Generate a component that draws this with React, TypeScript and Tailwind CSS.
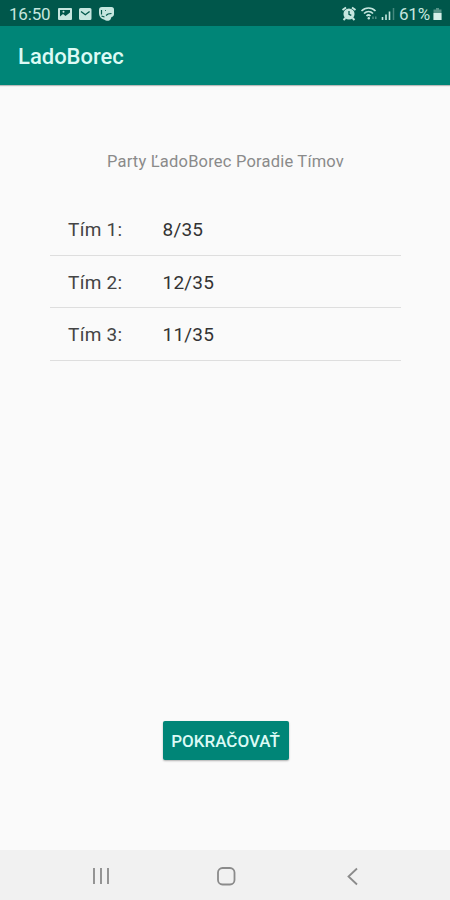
type TeamProps = {
  name: string
  score: string
}

const TEAMS: TeamProps[] = [
  { name: "Tím 1:", score: "8/35" },
  { name: "Tím 2:", score: "12/35" },
  { name: "Tím 3:", score: "11/35" },
]

const NotificationIcons = () => (
  <svg width="58" height="16" viewBox="0 0 58 16" className="ml-[7px]" fill="#c5e6df">
    {/* picture */}
    <path fillRule="evenodd" d="M2 2h12a1 1 0 0 1 1 1v10a1 1 0 0 1-1 1H2a1 1 0 0 1-1-1V3a1 1 0 0 1 1-1ZM3 4v6.500L6 8l2.500 2L13 6.500V4Z" />
    <circle cx="6.500" cy="5.700" r="1" />
    {/* mail */}
    <path d="M23.500 2h9.500a1.500 1.500 0 0 1 1.500 1.500v9A1.500 1.500 0 0 1 33 14h-9.500a1.500 1.500 0 0 1-1.500-1.500v-9A1.500 1.500 0 0 1 23.500 2Z" />
    <path d="m24 5.500 4.300 3.200 4.300-3.200" fill="none" stroke="#00574b" strokeWidth="1.400" />
    {/* chat */}
    <path d="M45 1h9.500A2.500 2.500 0 0 1 57 3.500V8c0 1.700-1 2.700-2.500 3l-1 2.500c-1.500 2-4.500 1.500-6.500 0-2.500-.5-5-3-5-6.500V4a3 3 0 0 1 3-3Z" />
    <path d="M44.500 4v4.500M44.500 10l3 1M49 9.500l2-1.500 3.500-.5M48 4.500h.8" fill="none" stroke="#00574b" strokeWidth="1.200" />
  </svg>
)

const SystemIcons = () => (
  <svg width="56" height="16" viewBox="0 0 56 16" fill="none" stroke="#c5e6df">
    {/* alarm */}
    <circle cx="8" cy="8" r="4.800" fill="#c5e6df" strokeWidth="1.500" />
    <path d="M1.500 4 5 1.500M11 1.500l3.500 2.500M2.500 14l2-2M13.500 14l-2-2" strokeWidth="2" />
    <path d="M8 5v3.300l2.300 1" stroke="#00574b" strokeWidth="1.300" />
    {/* wifi */}
    <path d="M20.500 5c4-4 10-4 14 0M23 7.500c2.700-2.500 6.500-2.500 9 0M25.500 10c1.200-1.200 2.800-1.200 4 0" strokeWidth="1.700" />
    <circle cx="27.800" cy="12.300" r="1.200" fill="#c5e6df" stroke="none" />
    <path d="M32 10.500v2.500M34.800 10.500v2.500" strokeWidth="1.200" opacity=".5" />
    {/* signal */}
    <path d="M41.500 11v3M45 8.500V14M48.500 5.500V14" strokeWidth="1.600" />
    <path d="M52.500 2v12" strokeWidth="1.500" opacity=".35" />
  </svg>
)

const StatusBar = () => (
  <div className="flex h-[26px] items-center justify-between bg-[#00574b] pt-0.5 pr-2 pl-[9px] text-[#c5e6df]">
    <div className="flex items-center">
      <span className="w-[41px] text-[17px] leading-none tracking-[-0.2px]">16:50</span>
      <NotificationIcons />
    </div>
    <div className="flex items-center">
      <SystemIcons />
      <span className="ml-[2px] w-[33px] text-[17px] leading-none tracking-[-0.2px]">61%</span>
      <svg width="9" height="14" viewBox="0 0 9 14" className="ml-px">
        <path d="M3 1h3v1.500h2.500V13h-8V2.500H3Z" fill="#569388" />
        <path d="M.5 6h8v7h-8Z" fill="#d5efe9" />
      </svg>
    </div>
  </div>
)

const TeamRow = ({ name, score }: TeamProps) => (
  <li className="flex h-[52.400px] items-center border-b border-[#dedede] pt-[3px] pl-[18px] text-[19px] text-[#444444]">
    <span className="w-[94.500px] tracking-[0.3px]">{name}</span>
    <span className="tracking-[0.2px] text-[#333333]">{score}</span>
  </li>
)

const NavigationBar = () => (
  <nav className="flex h-[50px] items-center justify-between bg-[#f1f1f1] pt-0.5 pr-[89px] pl-[91px]">
    <svg width="20" height="20" viewBox="0 0 20 20" fill="none" stroke="#8b8b8b" strokeWidth="1.800">
      <path d="M3 2v16M10 2v16M17 2v16" />
    </svg>
    <svg width="20" height="20" viewBox="0 0 20 20" fill="none" stroke="#8b8b8b" strokeWidth="1.800">
      <rect x="2" y="2" width="16.500" height="16.500" rx="4.500" />
    </svg>
    <svg width="20" height="20" viewBox="0 0 20 20" fill="none" stroke="#8b8b8b" strokeWidth="1.800">
      <path d="m16 2.500-8.500 8 8.500 8" />
    </svg>
  </nav>
)

const App = () => (
  <div className="flex h-screen w-full flex-col bg-[#fafafa] font-[Roboto,sans-serif]">
    <StatusBar />
    <header className="z-10 flex h-[59px] items-center bg-[#008577] pt-px pl-[18px] shadow-[0_1px_1px_rgba(0,0,0,0.25)]">
      <h1 className="text-[22px] font-medium text-[#dcfaf5]">LadoBorec</h1>
    </header>

    <main className="flex flex-1 flex-col items-center pl-px">
      <h2 className="mt-[65px] h-6 text-[16.500px] leading-6 tracking-[0.2px] text-[#8a8a8a]">
        Party ĽadoBorec Poradie Tímov
      </h2>
      <ul className="mt-[29.500px] w-[351px]">
        {TEAMS.map(team => <TeamRow key={team.name} {...team} />)}
      </ul>
      <button className="mt-auto mb-[90px] h-[39px] w-[126px] rounded-[2px] bg-[#008577] pt-[3px] text-[17px] font-medium text-[#dcfaf5] shadow-[0_1px_2px_rgba(0,0,0,0.3)]">
        POKRAČOVAŤ
      </button>
    </main>

    <NavigationBar />
  </div>
)

export default App
